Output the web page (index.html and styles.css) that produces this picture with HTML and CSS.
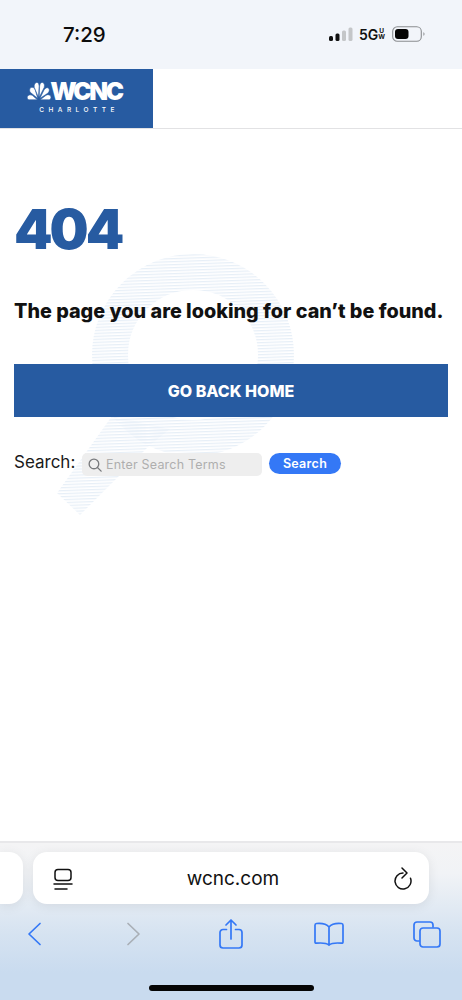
FILE: index.html
```html
<!DOCTYPE html>
<html lang="en">

<head>
    <meta charset="UTF-8">
    <meta name="viewport" content="width=device-width, initial-scale=1.0">
    <title>Page not found - WCNC</title>
    <link rel="stylesheet" href="styles.css">
</head>

<body>
    <div class="phone">
        <div class="status">
            <span class="time">7:29</span>
            <div class="status_right">
                <svg class="signal" width="24" height="15" viewBox="0 0 24 15">
                    <rect x="0" y="9" width="4" height="5" rx="1.500" fill="#111" />
                    <rect x="6.500" y="6.500" width="4" height="7.500" rx="1.500" fill="#111" />
                    <rect x="13" y="3.500" width="4" height="10.500" rx="1.500" fill="#c4c6c8" />
                    <rect x="19.500" y="0.500" width="4" height="13.500" rx="1.500" fill="#c4c6c8" />
                </svg>
                <span class="net">5G</span>
                <span class="net_small">U<br>W</span>
                <svg class="battery" width="33" height="16" viewBox="0 0 33 16">
                    <rect x="0.700" y="0.700" width="28.600" height="14.600" rx="4.600" fill="none" stroke="#8b8d90" stroke-width="1.100" />
                    <rect x="3" y="3" width="13.500" height="10" rx="3" fill="#050505" />
                    <path d="M31.300 6.200c.9.3 1.300 1 1.300 1.800s-.4 1.500-1.300 1.800z" fill="#9a9c9f" />
                </svg>
            </div>
        </div>

        <header class="site_head">
            <a class="logo" href="javascript:;">
                <div class="logo_top">
                    <svg class="peacock" width="24" height="18" viewBox="0 0 24 18">
                        <g fill="#fff" stroke="#275ba1" stroke-width="0.600">
                            <path d="M10.500 17.800H2.500C.3 17.800-.6 14.800 1.200 13.500c2-1.400 4.200-.4 5.400 1z" />
                            <path d="M10.800 16.500 3.500 10.500C1.800 8.500 2.800 5.300 5 5.300c2 0 3 1.700 3.500 3.500z" />
                            <path d="M11.500 15.500 7.300 5.500C6.700 3 8 .4 9.800.4c1.900 0 2.300 2.200 2.300 4.100z" />
                            <path d="M12.200 15.500 12.600 4.500C12.700 2.200 13.500.4 15.200.4c2 0 2.700 2.600 2 5z" />
                            <path d="M12.800 16.500 16.500 9C17.500 6.800 19.500 5 21.300 6c1.700 1 1.100 3.300-.2 5z" />
                            <path d="M13.200 17.800 19 13.300C20.800 12 23.700 12.700 24 15c.2 1.700-1 2.800-2.500 2.800z" />
                        </g>
                    </svg>
                    <span class="logo_name">WCNC</span>
                </div>
                <span class="logo_city">CHARLOTTE</span>
            </a>
        </header>

        <main class="content">
            <svg class="watermark" width="462" height="400" viewBox="0 0 462 400">
                <defs>
                    <pattern id="stripes" width="12" height="3" patternUnits="userSpaceOnUse" patternTransform="rotate(-2)">
                        <rect width="12" height="1.300" fill="#e7eff7" />
                    </pattern>
                </defs>
                <circle cx="193" cy="226" r="83" fill="none" stroke="url(#stripes)" stroke-width="36" />
                <polygon points="112,287 57,364 80,386 150,316 170,300" fill="url(#stripes)" />
            </svg>

            <h1 class="code">404</h1>
            <h2 class="msg">The page you are looking for can’t be found.</h2>
            <a class="home_btn" href="javascript:;">GO BACK HOME</a>

            <form class="search">
                <label class="search_label" for="q">Search:</label>
                <div class="search_box">
                    <svg width="14" height="14" viewBox="0 0 16 16" fill="none" stroke="#77797c" stroke-width="1.500">
                        <circle cx="6.800" cy="6.800" r="5.500" />
                        <path d="M10.800 10.800 15 15" stroke-linecap="round" />
                    </svg>
                    <span class="search_hint" id="q">Enter Search Terms</span>
                </div>
                <a class="search_btn" href="javascript:;">Search</a>
            </form>
        </main>

        <footer class="safari">
            <div class="tabs_row">
                <div class="tab_prev"></div>
                <div class="url_bar">
                    <svg width="20" height="23" viewBox="0 0 20 23" fill="none" stroke="#111" stroke-width="1.500" stroke-linecap="round">
                        <rect x="2" y="2.500" width="16" height="11" rx="3" />
                        <path d="M1 17h18M2 22h12" />
                    </svg>
                    <span class="url">wcnc.com</span>
                    <svg width="20" height="23" viewBox="0 0 20 23" fill="none" stroke="#111" stroke-width="1.500" stroke-linecap="round" stroke-linejoin="round">
                        <path d="M10 6A8 8 0 1 0 17.500 11.200" />
                        <path d="M9 1 14 6 9 11" />
                    </svg>
                </div>
            </div>
            <nav class="tools">
                <svg width="16" height="24" viewBox="0 0 16 24" fill="none" stroke="#3478f6" stroke-width="1.700" stroke-linecap="round" stroke-linejoin="round">
                    <path d="M13 1.500 2 12l11 10.500" />
                </svg>
                <svg width="16" height="24" viewBox="0 0 16 24" fill="none" stroke="#a9afb6" stroke-width="1.700" stroke-linecap="round" stroke-linejoin="round">
                    <path d="M3 1.500 14 12 3 22.500" />
                </svg>
                <svg width="24" height="30" viewBox="0 0 24 30" fill="none" stroke="#3478f6" stroke-width="1.700" stroke-linecap="round" stroke-linejoin="round">
                    <path d="M7.500 10.500H4a3 3 0 0 0-3 3V26a3 3 0 0 0 3 3h16a3 3 0 0 0 3-3V13.500a3 3 0 0 0-3-3h-3.500" />
                    <path d="M12 20V1.500M7 6l5-5 5 5" />
                </svg>
                <svg width="30" height="24" viewBox="0 0 30 24" fill="none" stroke="#3478f6" stroke-width="1.700" stroke-linecap="round" stroke-linejoin="round">
                    <path d="M15 5C12.500 2 8 1 2.500 1.500 1.500 1.600 1 2.300 1 3.200V20c0 .9.600 1.300 1.500 1.200C8 20.700 12.500 21 15 23c2.500-2 7-2.300 12.500-1.800.9.100 1.500-.3 1.500-1.200V3.200c0-.9-.5-1.600-1.500-1.700C22 1 17.500 2 15 5zM15 5v18" />
                </svg>
                <svg width="28" height="27" viewBox="0 0 28 27" fill="none" stroke="#3478f6" stroke-width="1.700" stroke-linecap="round" stroke-linejoin="round">
                    <path d="M6 20H4a3 3 0 0 1-3-3V4a3 3 0 0 1 3-3h13a3 3 0 0 1 3 3v2" />
                    <rect x="7" y="7" width="20" height="19" rx="3" />
                </svg>
            </nav>
            <div class="home_bar"></div>
        </footer>
    </div>
</body>

</html>
```

FILE: styles.css
```css
* {
    margin: 0;
    padding: 0;
    box-sizing: border-box;
}

body {
    background: #fff;
    font-family: "Inter", "Liberation Sans", sans-serif;
    color: #111;
}

a {
    text-decoration: none;
}

.phone {
    width: 462px;
    height: 1000px;
    display: flex;
    flex-direction: column;
    overflow: hidden;
}

/* status bar */
.status {
    height: 69px;
    flex: none;
    background: #f2f5fa;
    display: flex;
    align-items: center;
    justify-content: space-between;
    padding: 0 37px 1px 63px;
}

.time {
    font-size: 20.500px;
    font-weight: 500;
    color: #0c0c0c;
}

.status_right {
    display: flex;
    align-items: center;
}

.signal {
    margin-right: 6px;
}

.net {
    font-size: 14px;
    font-weight: 600;
}

.net_small {
    font-size: 6.500px;
    line-height: 6.500px;
    font-weight: 700;
    text-align: center;
    margin: 0 7px 0 0;
}

/* site header */
.site_head {
    height: 60px;
    flex: none;
    background: #fff;
    border-bottom: 1px solid #e2e2e4;
}

.logo {
    width: 153px;
    height: 59px;
    background: #275ba1;
    display: flex;
    flex-direction: column;
    align-items: center;
    padding-top: 11px;
    color: #fff;
}

.logo_top {
    display: flex;
    align-items: center;
    height: 22px;
    margin-left: -4px;
}

.peacock {
    margin-right: -1px;
}

.logo_name {
    font-size: 24.500px;
    line-height: 22px;
    font-weight: 900;
    letter-spacing: -2.400px;
}

.logo_city {
    font-size: 6.500px;
    line-height: 8px;
    font-weight: 500;
    letter-spacing: 4.500px;
    margin-top: 4px;
    margin-left: 5px;
}

/* main content */
.content {
    flex: 1;
    position: relative;
    padding: 0 14px;
    background: #fff;
}

.watermark {
    position: absolute;
    left: 0;
    top: 0;
}

.code,
.msg,
.home_btn,
.search {
    position: relative;
}

.code {
    margin-top: 65px;
    height: 70px;
    font-size: 55px;
    line-height: 70px;
    font-weight: 900;
    letter-spacing: -3px;
    color: #275ba1;
}

.msg {
    margin-top: 32px;
    font-size: 19.800px;
    line-height: 30px;
    font-weight: 800;
    white-space: nowrap;
    color: #111;
}

.home_btn {
    display: flex;
    align-items: center;
    justify-content: center;
    height: 53px;
    margin-top: 38px;
    background: #275ba1;
    color: #fff;
    font-size: 16px;
    font-weight: 800;
}

.search {
    display: flex;
    align-items: flex-start;
    margin-top: 36px;
}

.search_label {
    width: 68px;
    font-size: 17px;
    line-height: 18px;
    color: #1a1a1a;
}

.search_box {
    width: 180px;
    height: 23px;
    background: #eeeeee;
    border-radius: 5px;
    display: flex;
    align-items: center;
    gap: 4px;
    padding-left: 6px;
}

.search_hint {
    font-size: 12.500px;
    letter-spacing: 0.200px;
    color: #aeaeae;
}

.search_btn {
    width: 72px;
    height: 21px;
    margin-left: 7px;
    background: #3478f6;
    border-radius: 11px;
    color: #fff;
    font-size: 12.500px;
    line-height: 21px;
    font-weight: 600;
    text-align: center;
    letter-spacing: 0.300px;
}

/* safari toolbar */
.safari {
    height: 159px;
    flex: none;
    border-top: 2px solid #e8e8ea;
    background: linear-gradient(#f4f4f5 0, #f1f3f6 30px, #d6e3f1 90px, #c9dbef 130px);
    position: relative;
}

.tabs_row {
    display: flex;
    gap: 10px;
    height: 52px;
    margin-top: 9px;
}

.tab_prev {
    width: 23px;
    background: #fff;
    border-radius: 0 14px 14px 0;
    box-shadow: 0 2px 12px rgba(0, 0, 0, 0.08);
}

.url_bar {
    width: 396px;
    background: #fff;
    border-radius: 14px;
    box-shadow: 0 2px 12px rgba(0, 0, 0, 0.08);
    display: flex;
    align-items: center;
    justify-content: space-between;
    padding: 0 16px 0 20px;
}

.url {
    font-size: 19px;
    color: #111;
}

.tools {
    display: grid;
    grid-template-columns: repeat(5, 98px);
    justify-items: center;
    align-items: center;
    height: 32px;
    margin: 14px 0 0 -14px;
}

.home_bar {
    position: absolute;
    left: 149px;
    bottom: 9px;
    width: 165px;
    height: 6px;
    background: #050505;
    border-radius: 3px;
}
```
